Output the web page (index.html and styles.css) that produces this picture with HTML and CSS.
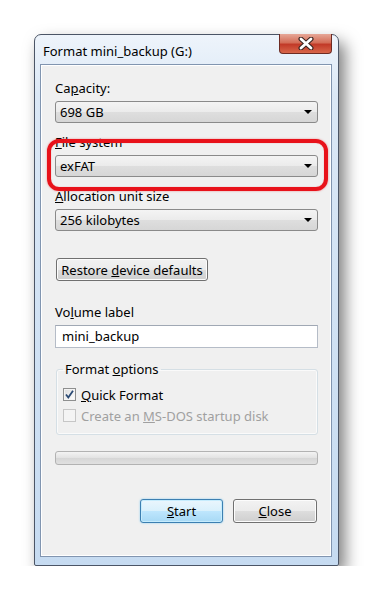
FILE: index.html
```html
<!DOCTYPE html>
<html lang="en">
<head>
    <meta charset="UTF-8">
    <title>Format mini_backup (G:)</title>
    <link rel="stylesheet" href="styles.css">
</head>
<body>
    <div class="window">
        <div class="titlebar">
            <span class="title">Format mini_backup (G:)</span>
            <div class="close">
                <svg width="18" height="13" viewBox="0 0 18 13">
                    <path d="M4 2 L14 11 M14 2 L4 11" stroke="#3a2420" stroke-width="5" stroke-linecap="round"/>
                    <path d="M4 2 L14 11 M14 2 L4 11" stroke="#ffffff" stroke-width="2.8" stroke-linecap="round"/>
                </svg>
            </div>
        </div>
        <div class="client">
            <div class="field">
                <div class="label">Ca<u>p</u>acity:</div>
                <div class="combo"><span>698 GB</span><i class="arrow"></i></div>
            </div>
            <div class="field marked">
                <div class="label"><u>F</u>ile system</div>
                <div class="combo"><span>exFAT</span><i class="arrow"></i></div>
                <div class="highlight"></div>
            </div>
            <div class="field">
                <div class="label"><u>A</u>llocation unit size</div>
                <div class="combo"><span>256 kilobytes</span><i class="arrow"></i></div>
            </div>
            <div class="btn restore"><span>Restore <u>d</u>evice defaults</span></div>
            <div class="field volume">
                <div class="label">Vo<u>l</u>ume label</div>
                <div class="textbox">mini_backup</div>
            </div>
            <fieldset class="group">
                <legend>Format <u>o</u>ptions</legend>
                <div class="check-row">
                    <span class="check">
                        <svg width="11" height="11" viewBox="0 0 11 11">
                            <path d="M2 5.5 L4.3 8.5 L9 1.8" fill="none" stroke="#2b4a74" stroke-width="1.8"/>
                        </svg>
                    </span>
                    <span><u>Q</u>uick Format</span>
                </div>
                <div class="check-row disabled">
                    <span class="check"></span>
                    <span>Create an <u>M</u>S-DOS startup disk</span>
                </div>
            </fieldset>
            <div class="progress"></div>
            <div class="actions">
                <div class="btn start"><span><u>S</u>tart</span></div>
                <div class="btn close-btn"><span><u>C</u>lose</span></div>
            </div>
        </div>
    </div>
</body>
</html>
```

FILE: styles.css
```css
body{
    margin: 0;
    background: #ffffff;
    font-family: "Noto Sans", "Open Sans", sans-serif;
    font-size: 13px;
    color: #000;
}
.window{
    box-sizing: border-box;
    width: 305px;
    margin: 34px 0 0 34px;
    padding: 0 6px 8px 5px;
    border: 1px solid #4b5566;
    border-radius: 7px 7px 2px 2px;
    background: linear-gradient(#eef4fb, #dbe8f6 60px, #c6dbf1);
    box-shadow: 6px 8px 16px rgba(0,0,0,0.5);
}
.titlebar{
    display: flex;
    justify-content: space-between;
    align-items: flex-start;
    height: 29px;
}
.title{
    padding: 8px 0 0 3px;
    line-height: 16px;
}
.close{
    width: 53px;
    height: 20px;
    margin-top: -1px;
    border: 1px solid #6d2b23;
    border-top: none;
    border-radius: 0 0 4px 4px;
    box-sizing: border-box;
    background: linear-gradient(#e6a797, #d46e58 45%, #c23a28 55%, #d8664a);
    display: flex;
    align-items: center;
    justify-content: center;
}
.client{
    border: 1px solid #8195b0;
    box-shadow: inset 0 0 0 1px #ffffff;
    background: #f0f0f0;
    padding: 15px 13px 33px 14px;
}
.field + .field{
    margin-top: 11px;
}
.label{
    line-height: 16px;
}
.marked{
    position: relative;
}
.highlight{
    position: absolute;
    left: -8px;
    right: -10px;
    top: 5px;
    bottom: -14px;
    border: 4px solid #e8121a;
    border-radius: 12px;
    box-shadow: 0 0 2px rgba(232,18,26,0.5), inset 0 0 1px rgba(232,18,26,0.5);
}
.combo{
    box-sizing: border-box;
    height: 22px;
    margin-top: 5px;
    border: 1px solid #8a8a8a;
    border-radius: 3px;
    background: linear-gradient(#f4f4f4, #ebebeb 50%, #dedede 51%, #d6d6d6);
    display: flex;
    align-items: center;
    justify-content: space-between;
    padding: 0 5px 0 4px;
}
.arrow{
    width: 0;
    height: 0;
    border-left: 4px solid transparent;
    border-right: 4px solid transparent;
    border-top: 4px solid #000;
}
.btn{
    box-sizing: border-box;
    display: flex;
    align-items: center;
    justify-content: center;
    border: 1px solid #707070;
    border-radius: 3px;
    background: linear-gradient(#f2f2f2, #ebebeb 50%, #dddddd 51%, #cfcfcf);
    box-shadow: inset 0 0 0 1px #fcfcfc;
}
.restore{
    width: 152px;
    height: 23px;
    margin: 27px 0 0 1px;
}
.volume{
    margin-top: 23px;
}
.textbox{
    box-sizing: border-box;
    height: 23px;
    margin-top: 5px;
    border: 1px solid #b5bcc7;
    border-top-color: #a0a8b4;
    background: #ffffff;
    padding-left: 6px;
    line-height: 21px;
}
.group{
    margin: 13px 0 0 1px;
    padding: 7px 6px 8px 6px;
    border: 1px solid #d5dfe5;
    border-radius: 3px;
    box-shadow: inset 0 0 0 1px #fafafa;
}
.group legend{
    padding: 0 2px;
    line-height: 16px;
}
.check-row{
    display: flex;
    align-items: center;
    height: 21px;
}
.check{
    box-sizing: border-box;
    width: 13px;
    height: 13px;
    margin-right: 5px;
    border: 1px solid #8e8f8f;
    background: linear-gradient(135deg, #dcdcdc, #ffffff);
    box-shadow: inset 0 0 0 1px #f4f4f4;
    display: flex;
    align-items: center;
    justify-content: center;
}
.disabled{
    color: #a0a0a0;
}
.disabled .check{
    border-color: #c6c6c6;
    background: #f4f4f4;
}
.progress{
    box-sizing: border-box;
    height: 14px;
    margin-top: 16px;
    border: 1px solid #b2b2b2;
    border-radius: 3px;
    background: linear-gradient(#f3f3f3, #e2e2e2 50%, #d6d6d6 51%, #e0e0e0);
}
.actions{
    display: flex;
    justify-content: flex-end;
    gap: 10px;
    margin-top: 34px;
    padding-right: 1px;
}
.start,
.close-btn{
    height: 24px;
}
.start{
    width: 83px;
    border-color: #3c7fb1;
    background: linear-gradient(#eaf6fd, #d9f0fc 50%, #bee6fd 51%, #a7d9f5);
    box-shadow: inset 0 0 0 1px #c6ecfd, 0 0 2px #7dc8f0;
}
.close-btn{
    width: 84px;
}
```
